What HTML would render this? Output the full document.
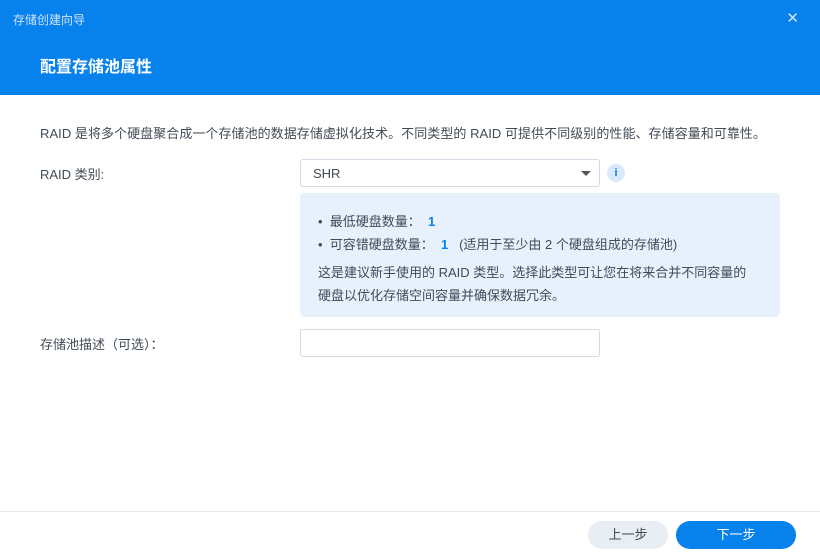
<!DOCTYPE html>
<html><head><meta charset="utf-8"><style>
*{margin:0;padding:0;box-sizing:border-box}
body{width:820px;height:559px;background:#fff;font-family:"Liberation Sans","Noto Sans CJK SC",sans-serif;color:#414b55;position:relative;overflow:hidden;font-size:13px}
.hdr{position:absolute;left:0;top:0;width:820px;height:95px;background:#0781ec}
.t1{position:absolute;left:13px;top:11px;font-size:12px;color:#cfe3fb}
.x{position:absolute;right:21px;top:9px;color:#cfe3fb;font-size:15px}
.t2{position:absolute;left:40px;top:53px;font-size:16px;color:#fff;font-weight:bold}
.a{position:absolute;white-space:nowrap}
.sel{position:absolute;left:300px;top:159px;width:300px;height:28px;border:1px solid #d3dce6;border-radius:3px}
.box{position:absolute;left:300px;top:193px;width:480px;height:124px;background:#e6f1fc;border-radius:4px}
.b{color:#0781ec;font-weight:bold}
.btn{position:absolute;top:521px;height:28px;border-radius:14px;text-align:center;line-height:28px;font-size:13px}
</style></head><body>
<div class="hdr"><div class="t1">存储创建向导</div><div class="x">✕</div><div class="t2">配置存储池属性</div></div>
<div class="a" style="left:40px;top:123px;letter-spacing:0.05px">RAID 是将多个硬盘聚合成一个存储池的数据存储虚拟化技术。不同类型的 RAID 可提供不同级别的性能、存储容量和可靠性。</div>
<div class="a" style="left:40px;top:164px">RAID 类别:</div>
<div class="sel"><span class="a" style="left:12px;top:6px">SHR</span><span class="a" style="left:280px;top:11px;width:0;height:0;border-left:5px solid transparent;border-right:5px solid transparent;border-top:5px solid #555"></span></div>
<div class="a" style="left:607px;top:164px;width:18px;height:18px;border-radius:9px;background:#d9e9fb;color:#0781ec;font-size:11px;font-weight:bold;text-align:center;line-height:18px">i</div>
<div class="box">
<div class="a" style="left:18px;top:18px">•&nbsp;&nbsp;最低硬盘数量：&nbsp;&nbsp;<span class="b">1</span></div>
<div class="a" style="left:18px;top:41px">•&nbsp;&nbsp;可容错硬盘数量：&nbsp;&nbsp;<span class="b">1</span>&nbsp;&nbsp;&nbsp;(适用于至少由 2 个硬盘组成的存储池)</div>
<div class="a" style="left:18px;top:69px">这是建议新手使用的 RAID 类型。选择此类型可让您在将来合并不同容量的</div>
<div class="a" style="left:18px;top:92px">硬盘以优化存储空间容量并确保数据冗余。</div>
</div>
<div class="a" style="left:40px;top:334px">存储池描述（可选）：</div>
<div class="sel" style="top:329px"></div>
<div class="a" style="left:0;top:511px;width:820px;height:1px;background:#e3e8ee"></div>
<div class="btn" style="left:588px;width:80px;background:#e9eef5;color:#414b55">上一步</div>
<div class="btn" style="left:676px;width:120px;background:#0781ec;color:#fff">下一步</div>
</body></html>
